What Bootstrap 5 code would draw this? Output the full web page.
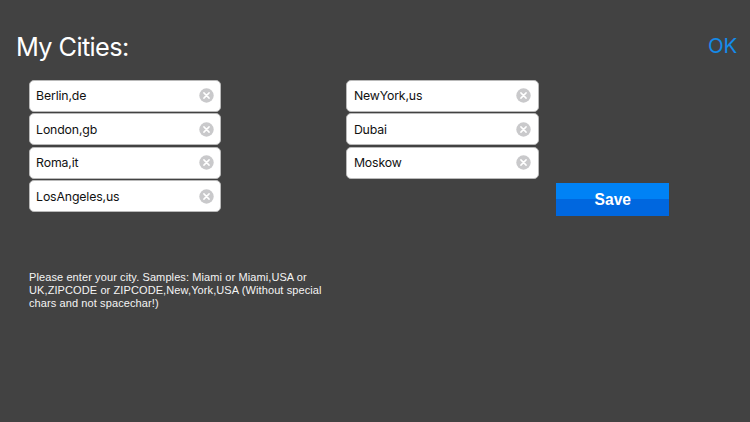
<!DOCTYPE html>
<html lang="en">
<head>
<meta charset="utf-8">
<meta name="viewport" content="width=device-width, initial-scale=1">
<title>My Cities</title>
<link rel="stylesheet" href="https://cdn.jsdelivr.net/npm/bootstrap@5.3.0/dist/css/bootstrap.min.css">
<style>
  body { background: #424242; font-family: Inter, sans-serif; width: 750px; height: 422px; }
  .top-bar { height: 79.6px; padding: 14px 13px 0 16px; }
  .page-title { font-size: 25.3px; font-weight: 400; letter-spacing: -.6px; line-height: 32px; }
  .ok-link { font-size: 20.5px; line-height: 30px; color: #148bea; letter-spacing: -.2px; margin-top: -2px; }
  .city-area { padding-left: 28.6px; height: 191.4px; }
  .city-list { width: 192.5px; gap: 1.6px; }
  .second-list { margin-left: 125.3px; }
  .city-field { height: 32px; padding: 0 6.5px; border: 1px solid #b9b9b9; border-radius: 5px; background: #fff; color: #111; font-size: 12.3px; line-height: 29px; letter-spacing: -.15px; }
  .save-btn { width: 113px; height: 32.5px; margin: 103.7px 0 0 17.4px; background: linear-gradient(#0082f5 0 48%, #0067df 48%); font: 700 15.6px/32px "Liberation Sans", Arial, sans-serif; }
  .hint { margin: 0 0 0 29px; width: 310px; font: 11px/12.8px "Liberation Sans", Arial, sans-serif; letter-spacing: .1px; color: #f4f4f4; }
</style>
<script src="https://cdn.jsdelivr.net/npm/bootstrap@5.3.0/dist/js/bootstrap.bundle.min.js"></script>
</head>
<body class="overflow-hidden">
<svg class="d-none">
  <symbol id="clear" viewBox="0 0 15 15">
    <circle cx="7.5" cy="7.5" r="7.2" fill="#c9c9cb"/>
    <path d="M4.9 4.9l5.2 5.2M10.1 4.9l-5.2 5.2" stroke="#fff" stroke-width="1.5" stroke-linecap="round"/>
  </symbol>
</svg>
<header class="top-bar d-flex justify-content-between align-items-center text-white">
  <h1 class="page-title mb-0">My Cities:</h1>
  <a class="ok-link text-decoration-none" href="#">OK</a>
</header>
<main>
  <div class="city-area d-flex align-items-start">
    <div class="city-list d-flex flex-column">
      <div class="city-field d-flex align-items-center justify-content-between"><span>Berlin,de</span><svg width="15" height="15"><use href="#clear"/></svg></div>
      <div class="city-field d-flex align-items-center justify-content-between"><span>London,gb</span><svg width="15" height="15"><use href="#clear"/></svg></div>
      <div class="city-field d-flex align-items-center justify-content-between"><span>Roma,it</span><svg width="15" height="15"><use href="#clear"/></svg></div>
      <div class="city-field d-flex align-items-center justify-content-between"><span>LosAngeles,us</span><svg width="15" height="15"><use href="#clear"/></svg></div>
    </div>
    <div class="city-list second-list d-flex flex-column">
      <div class="city-field d-flex align-items-center justify-content-between"><span>NewYork,us</span><svg width="15" height="15"><use href="#clear"/></svg></div>
      <div class="city-field d-flex align-items-center justify-content-between"><span>Dubai</span><svg width="15" height="15"><use href="#clear"/></svg></div>
      <div class="city-field d-flex align-items-center justify-content-between"><span>Moskow</span><svg width="15" height="15"><use href="#clear"/></svg></div>
    </div>
    <button type="button" class="save-btn btn border-0 rounded-0 p-0 text-white">Save</button>
  </div>
  <p class="hint">Please enter your city. Samples: Miami or Miami,USA or<br>UK,ZIPCODE or ZIPCODE,New,York,USA (Without special<br>chars and not spacechar!)</p>
</main>
</body>
</html>
